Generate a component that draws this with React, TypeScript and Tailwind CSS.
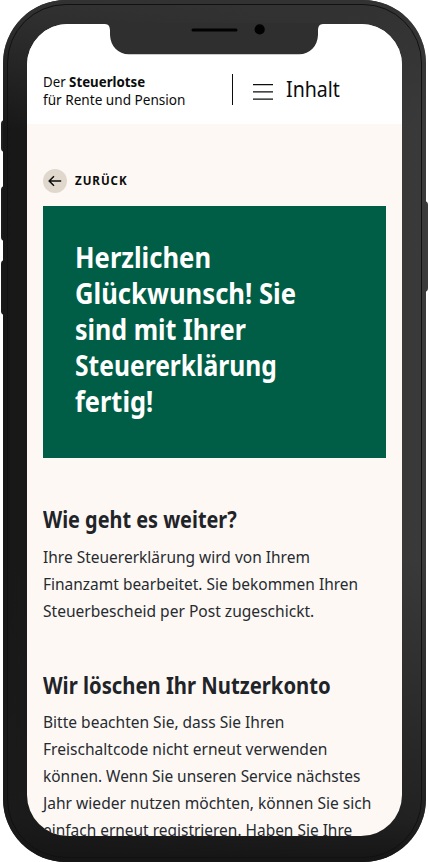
import { useLayoutEffect, useRef, useState } from "react";

type LineProps = { children: React.ReactNode; width: number };

// A line of text condensed horizontally so that it spans the given width.
function Line({ children, width }: LineProps) {
  const ref = useRef<HTMLSpanElement>(null);
  const [scale, setScale] = useState(1);
  useLayoutEffect(() => {
    if (ref.current) setScale(width / ref.current.offsetWidth);
  }, [width]);
  return (
    <span className="block">
      <span
        ref={ref}
        className="inline-block origin-left whitespace-nowrap align-top"
        style={{ transform: `scaleX(${scale})` }}
      >
        {children}
      </span>
    </span>
  );
}

function Notch() {
  return (
    <div className="absolute left-[105px] top-[23px] z-10 h-8 w-[218px]">
      <svg viewBox="0 0 218 32" className="block h-8 w-[218px]">
        <path
          d="M0 0V1C3.5 1 5 3.8 5 7.5V12C5.5 23 13 31.3 24 31.3H194C205 31.3 212.5 23 213 12V7.5C213 3.8 214.5 1 218 1V0Z"
          fill="#2f2f30"
        />
        <rect x="86.5" y="5.5" width="46" height="3" rx="1.5" fill="#020202" />
        <circle cx="154.7" cy="6.4" r="5.1" fill="#020202" />
      </svg>
    </div>
  );
}

function Header() {
  return (
    <header className="flex h-[100px] shrink-0 bg-white pl-4 text-[#0b0c0c]">
      <div className="mt-[49px] w-[189px] text-[14.5px] leading-[17.5px]">
        <Line width={102.5}>
          Der <b className="font-bold">Steuerlotse</b>
        </Line>
        <Line width={142.5}>für Rente und Pension</Line>
      </div>
      <div className="mt-[50px] h-[31px] w-px bg-[#0b0c0c]" />
      <button className="ml-5 mt-[50px] flex h-8 items-start">
        <svg viewBox="0 0 20 17" className="mt-[10px] h-[17px] w-5" stroke="#0b0c0c" strokeWidth="1.3">
          <path d="M0 .7H20M0 7.9H20M0 15.1H20" />
        </svg>
        <span className="ml-[13px] text-left text-[21px] leading-[31px]">
          <Line width={54}>Inhalt</Line>
        </span>
      </button>
    </header>
  );
}

export default function App() {
  return (
    <div className="relative h-[862px] w-[429px] overflow-hidden bg-white font-['Noto_Sans',sans-serif]">
      <i className="absolute left-px top-[120px] h-8 w-1 rounded-l-sm bg-[#202021]" />
      <i className="absolute left-px top-[186px] h-[55px] w-1 rounded-l-sm bg-[#1b1b1c]" />
      <i className="absolute left-px top-[260px] h-[55px] w-1 rounded-l-sm bg-[#19191a]" />
      <i className="absolute left-[424px] top-[201px] h-[91px] w-1 rounded-r-sm bg-[#3c3c3d]" />

      <div className="relative ml-[3px] h-[862px] w-[423px] rounded-[63px] bg-linear-to-r from-[#171718] via-[#2b2b2c] to-[#3a3a3b] px-6 pt-6">
        <div className="absolute inset-0 rounded-[63px] bg-linear-to-b from-[#323233] from-0% via-[#323233]/0 via-15% to-transparent" />
        <div className="absolute inset-0 rounded-[63px] bg-linear-to-t from-[#151516] from-0% via-[#1b1b1c]/80 via-5% to-transparent to-35%" />
        <div className="absolute inset-x-1 inset-y-1 rounded-[59px] border border-[#111112]" />

        <main className="relative flex h-[812px] w-[375px] flex-col overflow-hidden rounded-[41px] bg-[#fdf8f4] text-[#1f2429]">
          <Header />
          <div className="px-4">
            <a className="mt-[45px] flex h-6 items-center gap-2 text-[#0b0c0c]">
              <span className="flex size-6 items-center justify-center rounded-full bg-[#e1d8cd]">
                <svg viewBox="0 0 14 12" className="h-3 w-[14px]" fill="none" stroke="#0b0c0c" strokeWidth="1.5">
                  <path d="M13.2 6H1.5M6 1.2 1.2 6 6 10.8" />
                </svg>
              </span>
              <span className="text-xs font-bold leading-6 tracking-[1px]">
                <Line width={53}>ZURÜCK</Line>
              </span>
            </a>
            <h1 className="mt-[13px] h-[252px] bg-[#005e46] pl-8 pt-[33px] text-[29px] font-bold leading-9 text-white">
              <Line width={136}>Herzlichen</Line>
              <Line width={221}>Glückwunsch! Sie</Line>
              <Line width={171}>sind mit Ihrer</Line>
              <Line width={202}>Steuererklärung</Line>
              <Line width={78}>fertig!</Line>
            </h1>
            <h2 className="mt-[47px] text-[22.5px] font-bold leading-[30px]">
              <Line width={194}>Wie geht es weiter?</Line>
            </h2>
            <p className="mt-2 text-[17px] leading-[27px] text-[#262b30]">
              <Line width={267}>Ihre Steuererklärung wird von Ihrem</Line>
              <Line width={315}>Finanzamt bearbeitet. Sie bekommen Ihren</Line>
              <Line width={271}>Steuerbescheid per Post zugeschickt.</Line>
            </p>
            <h2 className="mt-[47px] text-[22.5px] font-bold leading-[30px]">
              <Line width={288}>Wir löschen Ihr Nutzerkonto</Line>
            </h2>
            <p className="mt-[7px] text-[17px] leading-[27px] text-[#262b30]">
              <Line width={241}>Bitte beachten Sie, dass Sie Ihren</Line>
              <Line width={284}>Freischaltcode nicht erneut verwenden</Line>
              <Line width={317}>können. Wenn Sie unseren Service nächstes</Line>
              <Line width={328}>Jahr wieder nutzen möchten, können Sie sich</Line>
              <Line width={309}>einfach erneut registrieren. Haben Sie Ihre</Line>
            </p>
          </div>
        </main>
      </div>
      <Notch />
    </div>
  );
}
